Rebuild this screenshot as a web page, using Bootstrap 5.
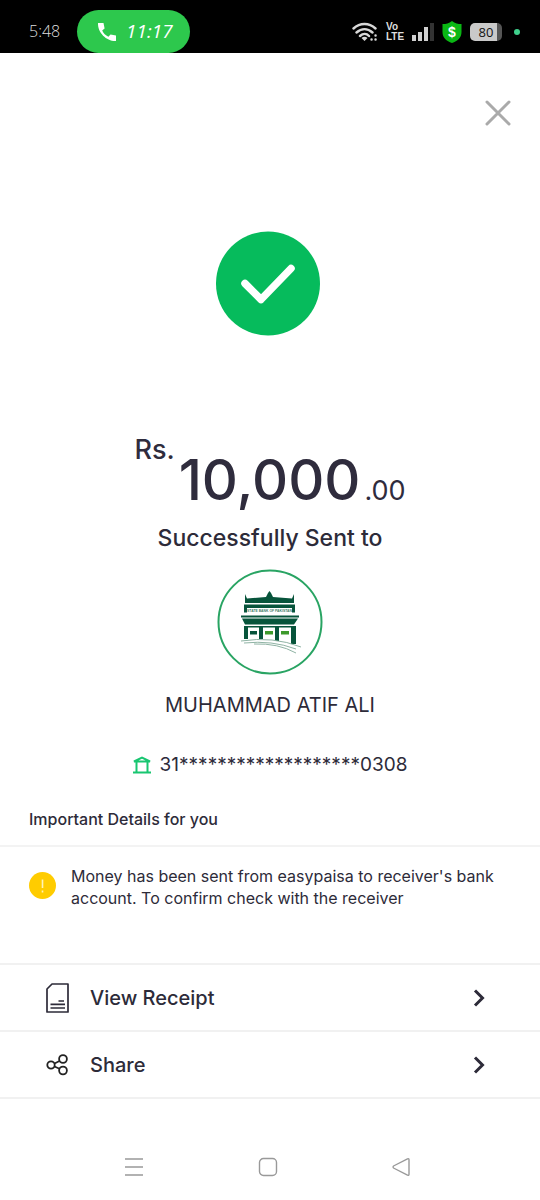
<!DOCTYPE html>
<html lang="en">
<head>
<meta charset="utf-8">
<meta name="viewport" content="width=device-width, initial-scale=1">
<title>Transfer successful</title>
<link rel="stylesheet" href="https://cdn.jsdelivr.net/npm/bootstrap@5.3.0/dist/css/bootstrap.min.css">
<style>
  body { font-family: Inter, "Liberation Sans", sans-serif; color: #2d2b39; background: #fff; }
  svg { display: block; flex: none; }
  .status-bar { height: 53px; background: #000; color: #ddd; padding: 10px 20px 0 29px; }
  .status-icons { height: 43px; }
  .clock { width: 48px; font: 300 16px/43px "Open Sans", sans-serif; }
  .call-pill { height: 43px; width: 113px; background: #2dc84d; color: #fff; border-radius: 22px; font: italic 400 19px/43px "Open Sans", sans-serif; gap: 9px; padding-left: 20px; }
  .volte { font: 700 10px/10px "Liberation Sans", sans-serif; width: 17px; }
  .battery { width: 32px; height: 18px; border-radius: 5px; background: linear-gradient(90deg, #c9c9c9 84%, #555 84%); color: #111; font: 400 13px/18px "Open Sans", sans-serif; }
  .live-dot { width: 6px; height: 6px; border-radius: 50%; background: #3fd08c; }
  .close-row { padding: 47px 29px 0; }
  .success { margin-top: 105px; }
  .amount { margin-top: 96px; color: #2f2c3d; }
  .amount-side { font-size: 27px; font-weight: 500; line-height: 34px; }
  .cents { font-weight: 400; }
  .amount-main { font-size: 56px; font-weight: 500; line-height: 70px; }
  .sent { font-size: 23px; font-weight: 500; line-height: 30px; margin-top: 8px; }
  .bank-logo { margin-top: 16px; }
  .receiver { font-size: 20px; line-height: 30px; margin-top: 15px; }
  .account { font-size: 19px; line-height: 26px; margin-top: 32px; gap: 9px; }
  .details-title { font-size: 16px; font-weight: 500; line-height: 24px; padding: 0 29px 14px; margin: 29px 0 0; border-bottom: 2px solid #f3f3f3; }
  .notice { font-size: 16px; line-height: 22px; padding: 18px 29px 54px; gap: 15px; }
  .action { font-size: 20px; font-weight: 500; height: 67px; padding: 0 55px 0 46px; border: 0; border-bottom: 2px solid #f1f1f1; background: #fff; color: #2d2b39; width: 100%; text-align: left; gap: 21px; }
  .actions { border-top: 2px solid #f1f1f1; }
  .nav-keys { padding: 58px 129px 23px 124px; }
  .key { padding: 0; border: 0; background: none; color: #999; }
</style>
</head>
<body>
<header class="status-bar d-flex align-items-start">
  <span class="clock">5:48</span>
  <span class="call-pill d-flex align-items-center">
    <svg width="20" height="20" viewBox="0 0 20 20" fill="#fff" aria-hidden="true"><path d="M1 1h5.500l1.100 5.500-2.400 2.100c1.200 2.700 3.400 4.900 6.200 6.200L13.500 12.400l5.500 1.100V19C10 19.500 .5 11 1 1z"/></svg>
    <span>11:17</span>
  </span>
  <span class="status-icons d-flex align-items-center ms-auto">
    <svg width="26" height="20" viewBox="0 0 26 20" fill="none" stroke="#d8d8d8" stroke-width="2.400" stroke-linecap="round" aria-hidden="true"><path d="M1.500 6.500C8 .5 17 .5 23.500 6.500M4.500 10.500c5-4.500 11-4.500 16 0M8 14c3-2.700 6.500-2.700 9 0"/><path d="M9.500 16q3-2.500 6 0l-3 3z" fill="#d8d8d8" stroke="none"/><path d="M19.500 17.500h.1M23.500 13.500h.1M23.500 17.500h.1"/></svg>
    <span class="volte ms-2">Vo<br>LTE</span>
    <svg class="ms-2" width="23" height="19" viewBox="0 0 23 19" aria-hidden="true"><path fill="#d0d0d0" d="M1 13h4v6H1zM7 10h4v9H7zM13 5h4v14h-4z"/><path fill="#333" d="M19 1h4v18h-4z"/></svg>
    <svg class="ms-2" width="20" height="22" viewBox="0 0 20 22" aria-hidden="true"><path fill="#0ab714" d="M10 0c3 2.500 6 3 9.500 3v8c0 6-4 9-9.500 11C4.500 20 .5 17 .5 11V3C4 3 7 2.500 10 0z"/><text x="10" y="16" text-anchor="middle" font-family="Liberation Sans, sans-serif" font-size="14" font-weight="700" fill="#fff">$</text></svg>
    <span class="battery text-center mx-2">80</span>
    <span class="live-dot ms-1"></span>
  </span>
</header>

<main>
  <div class="close-row d-flex justify-content-end">
    <button class="key" type="button" aria-label="Close"><svg width="26" height="26" viewBox="0 0 26 26" stroke="#aaa" stroke-width="3" stroke-linecap="round" aria-hidden="true"><path d="M2 2l22 22M24 2L2 24"/></svg></button>
  </div>

  <section class="d-flex flex-column align-items-center text-center">
    <svg class="success" width="108" height="106" viewBox="0 0 108 106" role="img" aria-label="Success"><circle cx="52" cy="52.500" r="52" fill="#06bb5c"/><path d="M29 52.500L45 68.500L75 37.500" fill="none" stroke="#fff" stroke-width="7.500" stroke-linecap="round" stroke-linejoin="round"/></svg>
    <div class="amount d-flex">
      <span class="amount-side">Rs.</span>
      <span class="d-flex align-items-baseline pt-2 mt-1 ms-1"><span class="amount-main">10,000</span><span class="amount-side cents ms-1">.00</span></span>
    </div>
    <div class="sent">Successfully Sent to</div>
    <svg class="bank-logo" width="106" height="106" viewBox="0 0 106 106" role="img" aria-label="State Bank of Pakistan">
      <circle cx="53" cy="53" r="51.500" fill="#fff" stroke="#29a463" stroke-width="2"/>
      <g fill="#07543b">
        <path d="M28 25l2 4.500 19-1.500 2-4 1.500-2 1.500 2 2 4 19 1.500 2-4.500v9H28z"/>
        <path d="M27 35.500h51v8h-3V39H30v4.500h-3z"/>
        <path d="M24 46.500h58v2H24zM25 49.500h56l-4 6H28z"/>
        <path d="M27 57h52v1.500H27zM27 58h4v12h-4zM42 58h4v12h-4zM58 58h4v14h-4zM74 58h5v17h-5z"/>
        <path d="M33 62h7v3.500h-7z"/>
      </g>
      <path fill="#3d9a2b" d="M48 62h8v3.500h-8zM64 62h8v3.500h-8z"/>
      <text x="52.500" y="43" text-anchor="middle" font-family="Liberation Sans, sans-serif" font-size="3.400" font-weight="700" fill="#3f7e69">STATE BANK OF PAKISTAN</text>
      <path d="M24 72q32-5 60 6M27 74q28-3 52 6M37 75q24-1 42 9" fill="none" stroke="#8fb3a4"/>
    </svg>
    <div class="receiver">MUHAMMAD ATIF ALI</div>
    <div class="account d-flex align-items-center">
      <svg width="18" height="18" viewBox="0 0 18 18" fill="none" stroke="#18c671" stroke-width="2" aria-hidden="true"><path d="M1 5.500L9 1.500l8 4zM3.500 6v10M14.500 6v10M0 16.500h18"/></svg>
      <span>31*******************0308</span>
    </div>
  </section>

  <h1 class="details-title">Important Details for you</h1>
  <div class="notice d-flex align-items-center">
    <svg class="mb-1" width="27" height="27" viewBox="0 0 27 27" aria-hidden="true"><circle cx="13.500" cy="13.500" r="13.500" fill="#fc0"/><path d="M13.500 7.500v8.500M13.500 18.500v2" stroke="#fff3b8" stroke-width="1.600"/></svg>
    <p class="mb-0">Money has been sent from easypaisa to receiver's bank account. To confirm check with the receiver</p>
  </div>

  <div class="actions">
    <button class="action d-flex align-items-center" type="button">
      <svg width="23" height="30" viewBox="0 0 23 30" fill="none" stroke="#2d2b39" stroke-width="1.700" aria-hidden="true"><path d="M6 1h16v28H1V6z" stroke-linejoin="round"/><path d="M12.500 18H18M4.500 21.300H19M4.500 25H19"/></svg>
      <span>View Receipt</span>
      <svg class="ms-auto" width="12" height="18" viewBox="0 0 12 18" fill="none" stroke="#2d2b39" stroke-width="3" aria-hidden="true"><path d="M2 1.500L9.500 9L2 16.500"/></svg>
    </button>
    <button class="action d-flex align-items-center" type="button">
      <svg width="23" height="22" viewBox="0 0 23 22" fill="none" stroke="#222" stroke-width="1.800" aria-hidden="true"><circle cx="5" cy="11" r="3.700"/><circle cx="17" cy="5" r="3.900"/><circle cx="17" cy="16.500" r="3.900"/><path d="M8.500 9.500l5-2.500M8.500 12.500l5 2.300"/></svg>
      <span>Share</span>
      <svg class="ms-auto" width="12" height="18" viewBox="0 0 12 18" fill="none" stroke="#2d2b39" stroke-width="3" aria-hidden="true"><path d="M2 1.500L9.500 9L2 16.500"/></svg>
    </button>
  </div>
</main>

<nav class="nav-keys d-flex justify-content-between" aria-label="System navigation">
  <button class="key" type="button" aria-label="Recent apps"><svg width="20" height="20" viewBox="0 0 20 20" stroke="#999" stroke-width="1.500" aria-hidden="true"><path d="M1 2h18M1 10h18M1 18h18"/></svg></button>
  <button class="key" type="button" aria-label="Home"><svg width="20" height="20" viewBox="0 0 20 20" fill="none" stroke="#999" stroke-width="1.400" aria-hidden="true"><rect x="1.500" y="1.500" width="17" height="17" rx="4"/></svg></button>
  <button class="key" type="button" aria-label="Back"><svg width="20" height="20" viewBox="0 0 20 20" fill="none" stroke="#999" stroke-width="1.400" stroke-linejoin="round" aria-hidden="true"><path d="M2.500 9l14-7.200q1.500-.5 1.500 1v14.400q0 1.500-1.500 1L2.500 11q-1-1 0-2z"/></svg></button>
</nav>
<script src="https://cdn.jsdelivr.net/npm/bootstrap@5.3.0/dist/js/bootstrap.bundle.min.js"></script>
</body>
</html>
